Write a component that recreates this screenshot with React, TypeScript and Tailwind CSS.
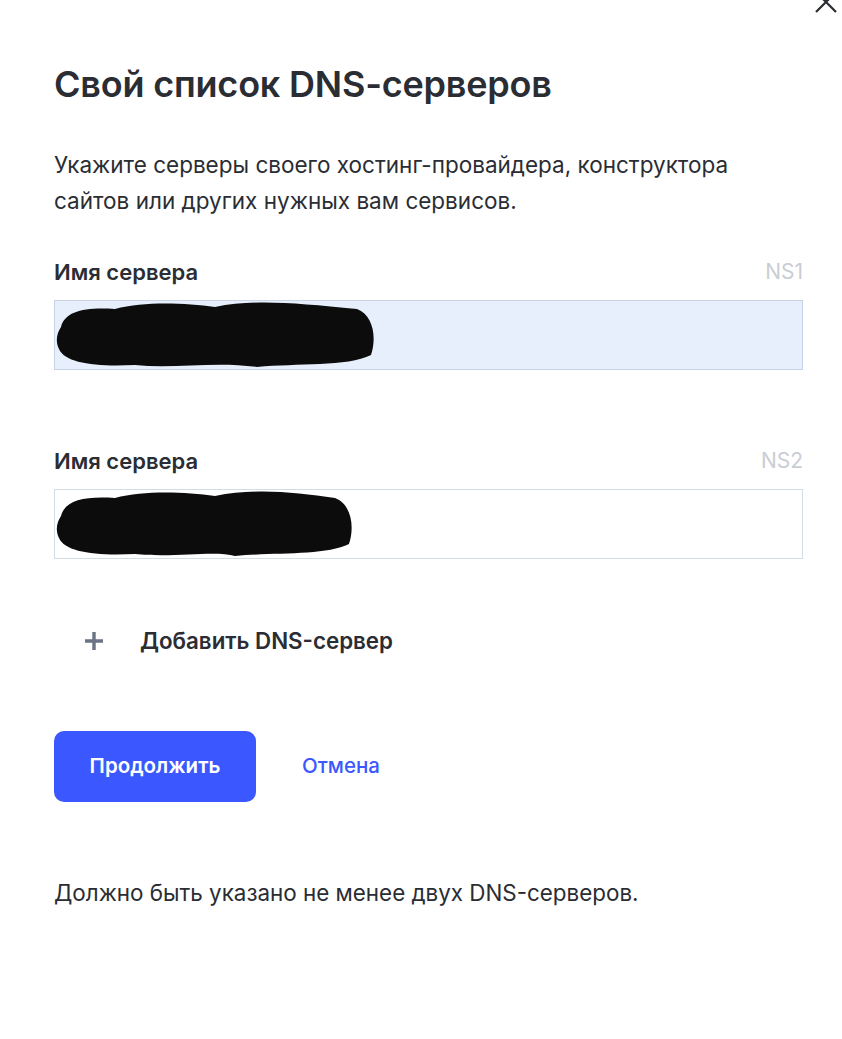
import React from 'react';

const font = { fontFamily: 'Inter, "Noto Sans", sans-serif' };

const Redacted: React.FC<{ width: number }> = ({ width }) => (
  <svg width={width} height="76" viewBox={`0 0 ${width} 76`} className="absolute -top-1 left-0">
    <path
      d={`M6 30 C 10 14, 30 10, 60 12 C 90 4, 130 6, 160 10 C 200 2, 240 6, ${width - 20} 12 C ${width - 4} 18, ${width} 40, ${width - 6} 58 C ${width - 30} 70, ${width - 80} 66, ${width - 120} 70 C 160 64, 120 72, 80 68 C 40 70, 10 66, 4 52 C 0 44, 2 36, 6 30 Z`}
      fill="#0c0c0c"
    />
  </svg>
);

const ServerField: React.FC<{ ns: string; active?: boolean; blob: number; className?: string }> = ({
  ns,
  active,
  blob,
  className,
}) => (
  <div className={`flex flex-col ${className ?? ''}`}>
    <div className="flex items-center justify-between h-[28px]">
      <span className="text-[22px] font-semibold text-[#2a2d33]">Имя сервера</span>
      <span className="text-[21px] text-[#c9cdd4]">{ns}</span>
    </div>
    <div
      className={`relative mt-[14px] h-[70px] border ${
        active ? 'bg-[#e8effc] border-[#c8d4e4]' : 'bg-white border-[#d3dbe6]'
      }`}
    >
      <Redacted width={blob} />
    </div>
  </div>
);

export default function App() {
  return (
    <div className="relative w-[842px] h-[1039px] bg-white overflow-hidden" style={font}>
      <button className="absolute right-[4px] top-[-10px] text-[#2a2d33]">
        <svg width="24" height="24" viewBox="0 0 24 24" fill="none" stroke="currentColor" strokeWidth="2.2">
          <path d="M2 2 L22 22 M22 2 L2 22" />
        </svg>
      </button>

      <div className="pl-[54px] pr-[39px] pt-[62px]">
        <h1 className="text-[36px] leading-[44px] font-semibold text-[#2a2d33] tracking-[-0.2px]">
          Свой список DNS-серверов
        </h1>
        <p className="mt-[41px] text-[22.5px] leading-[36px] text-[#2a2d33] pr-[30px]">
          Укажите серверы своего хостинг-провайдера, конструктора сайтов или других нужных вам сервисов.
        </p>

        <ServerField ns="NS1" active blob={322} className="mt-[39px]" />
        <ServerField ns="NS2" blob={300} className="mt-[77px]" />

        <button className="mt-[60px] flex items-center gap-[36px] pl-[30px] h-[44px]">
          <svg width="20" height="20" viewBox="0 0 20 20" fill="none" stroke="#6b7385" strokeWidth="3.4">
            <path d="M10 1 V19 M1 10 H19" />
          </svg>
          <span className="text-[22.3px] font-semibold text-[#2a2d33]">Добавить DNS-сервер</span>
        </button>

        <div className="mt-[68px] flex items-center gap-[46px]">
          <button className="w-[202px] h-[71px] rounded-[10px] bg-[#3b57ff] text-white text-[20.5px] font-semibold">
            Продолжить
          </button>
          <button className="text-[20.5px] font-medium text-[#3b57ff]">Отмена</button>
        </div>

        <p className="mt-[75px] text-[22.4px] leading-[32px] text-[#2a2d33]">
          Должно быть указано не менее двух DNS-серверов.
        </p>
      </div>
    </div>
  );
}
